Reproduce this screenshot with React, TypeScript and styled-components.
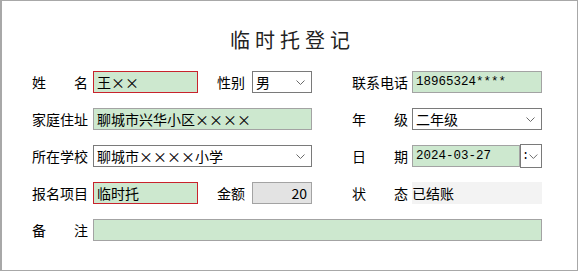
import styled, { createGlobalStyle } from "styled-components";

const GlobalStyle = createGlobalStyle`
	html, body {
		margin: 0;
		padding: 0;
		background: #ffffff;
	}
	body {
		font-family: "Noto Sans CJK SC", "Liberation Sans", sans-serif;
		color: #000000;
	}
`;

const CJK = `"Noto Sans CJK SC", sans-serif`;
const MONO = `"Liberation Mono", "Noto Sans CJK SC", monospace`;

const Frame = styled.div`
	box-sizing: border-box;
	width: 578px;
	height: 271px;
	border: 1px solid #a8a8a8;
	border-left-width: 2px;
	background: #ffffff;
	padding-top: 22px;
`;

const Title = styled.h1`
	margin: 0;
	text-align: center;
	font-family: ${CJK};
	font-weight: 400;
	font-size: 20px;
	line-height: 34px;
	letter-spacing: 5px;
	color: #222222;
	padding-left: 6px;
`;

const Form = styled.div`
	display: grid;
	grid-template-columns: 56px 5px 105px 19px 28px 7px 60px 40px 56px 4px 130px;
	grid-auto-rows: 22px;
	row-gap: 15px;
	margin: 14px 0 0 30px;
`;

const Label = styled.div<{ $col: number; $spread?: boolean }>`
	grid-column: ${(p) => p.$col} / span 1;
	display: flex;
	align-items: center;
	justify-content: ${(p) => (p.$spread ? "space-between" : "flex-start")};
	font-family: ${CJK};
	font-size: 14px;
	white-space: nowrap;
`;

const Field = styled.div<{
	$col: number;
	$span?: number;
	$tone?: "green" | "gray" | "plain" | "flat";
	$alert?: boolean;
	$right?: boolean;
	$mono?: boolean;
}>`
	grid-column: ${(p) => p.$col} / span ${(p) => p.$span ?? 1};
	box-sizing: border-box;
	height: 22px;
	display: flex;
	align-items: center;
	justify-content: ${(p) => (p.$right ? "flex-end" : "flex-start")};
	padding: ${(p) => (p.$tone === "flat" ? "0" : "0 4px 0 3px")};
	font-family: ${(p) => (p.$mono ? MONO : CJK)};
	font-size: ${(p) => (p.$mono ? "12.5px" : "14px")};
	white-space: nowrap;
	overflow: hidden;
	background: ${(p) =>
		p.$tone === "green"
			? "#cde8cf"
			: p.$tone === "gray"
				? "#e3e3e3"
				: p.$tone === "flat"
					? "#f3f3f3"
					: "#ffffff"};
	border: ${(p) => (p.$tone === "flat" ? "0" : "1px solid")};
	border-color: ${(p) => (p.$alert ? "#c8232c" : "#a3a3a3")};
`;

const Select = styled.div<{ $col: number; $span?: number }>`
	grid-column: ${(p) => p.$col} / span ${(p) => p.$span ?? 1};
	box-sizing: border-box;
	height: 22px;
	display: flex;
	align-items: center;
	justify-content: space-between;
	padding: 0 6px 0 3px;
	font-family: ${CJK};
	font-size: 14px;
	background: #ffffff;
	border: 1px solid #7a7a7a;
`;

const DateGroup = styled.div`
	grid-column: 11 / span 1;
	display: flex;
	height: 22px;
`;

const DateButton = styled.div`
	box-sizing: border-box;
	width: 22px;
	height: 24px;
	margin-top: -1px;
	border: 1px solid #7a7a7a;
	background: #ffffff;
	display: flex;
	align-items: center;
	justify-content: space-between;
	padding: 0 3px 0 1px;
	font-family: ${MONO};
	font-size: 12px;
`;

const Chevron = () => (
	<svg width="9" height="5" viewBox="0 0 9 5">
		<path d="M0.5 0.5 L4.5 4.5 L8.5 0.5" fill="none" stroke="#6a6a6a" strokeWidth="1" />
	</svg>
);

const App = () => {
	return (
		<>
			<GlobalStyle />
			<Frame>
				<Title>临时托登记</Title>
				<Form>
					<Label $col={1} $spread>
						<span>姓</span>
						<span>名</span>
					</Label>
					<Field $col={3} $tone="green" $alert>
						王××
					</Field>
					<Label $col={5}>性别</Label>
					<Select $col={7}>
						男
						<Chevron />
					</Select>
					<Label $col={9}>联系电话</Label>
					<Field $col={11} $tone="green" $mono>
						18965324****
					</Field>

					<Label $col={1}>家庭住址</Label>
					<Field $col={3} $span={5} $tone="green">
						聊城市兴华小区××××
					</Field>
					<Label $col={9} $spread>
						<span>年</span>
						<span>级</span>
					</Label>
					<Select $col={11}>
						二年级
						<Chevron />
					</Select>

					<Label $col={1}>所在学校</Label>
					<Select $col={3} $span={5}>
						聊城市××××小学
						<Chevron />
					</Select>
					<Label $col={9} $spread>
						<span>日</span>
						<span>期</span>
					</Label>
					<DateGroup>
						<Field $col={1} $tone="green" $mono style={{ flex: 1 }}>
							2024-03-27
						</Field>
						<DateButton>
							:
							<Chevron />
						</DateButton>
					</DateGroup>

					<Label $col={1}>报名项目</Label>
					<Field $col={3} $tone="green" $alert>
						临时托
					</Field>
					<Label $col={5}>金额</Label>
					<Field $col={7} $tone="gray" $right>
						20
					</Field>
					<Label $col={9} $spread>
						<span>状</span>
						<span>态</span>
					</Label>
					<Field $col={11} $tone="flat">
						已结账
					</Field>

					<Label $col={1} $spread>
						<span>备</span>
						<span>注</span>
					</Label>
					<Field $col={3} $span={9} $tone="green" />
				</Form>
			</Frame>
		</>
	);
};

export default App;
